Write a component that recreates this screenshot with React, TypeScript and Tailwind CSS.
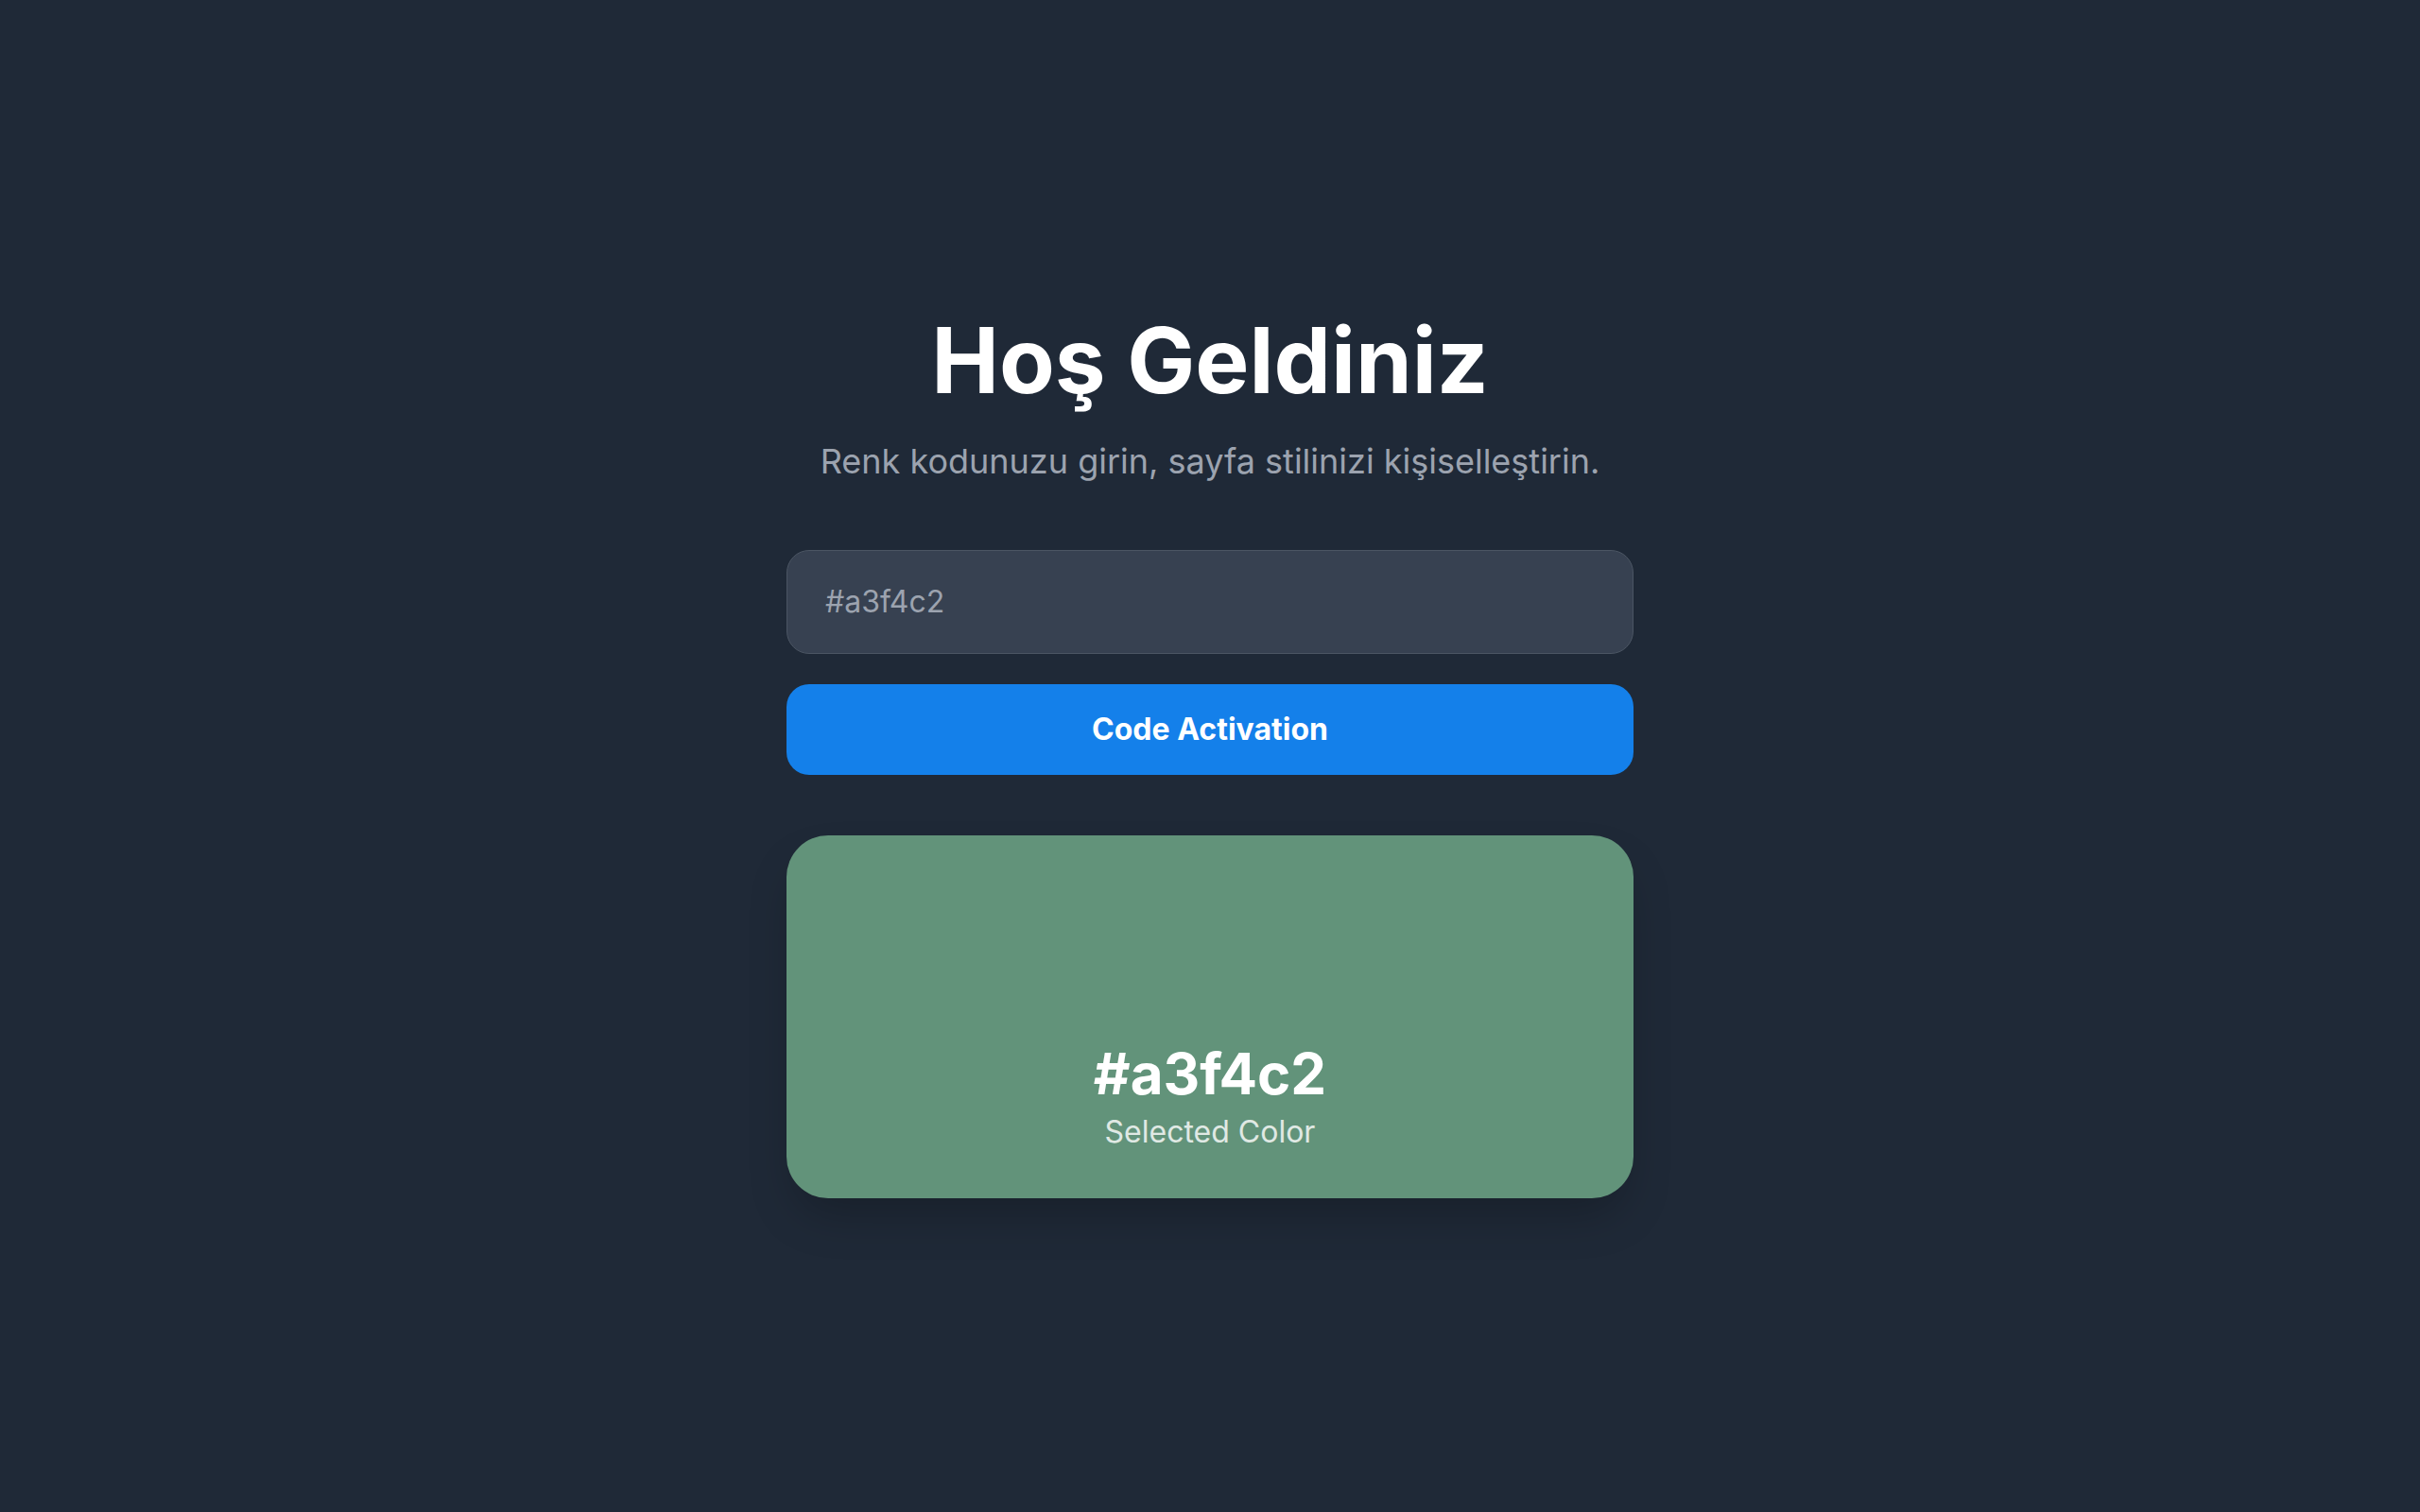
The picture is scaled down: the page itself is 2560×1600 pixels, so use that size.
import { useState } from "react";

export default function App() {
    const [code, setCode] = useState("");
    const [color, setColor] = useState("#a3f4c2");

    const activate = () => {
        if (/^#[0-9a-fA-F]{6}$/.test(code.trim())) {
            setColor(code.trim());
        }
    };

    return (
        <div
            className="min-h-screen w-full bg-[#1f2937] flex items-center justify-center"
            style={{ fontFamily: "Inter, 'Noto Sans', sans-serif" }}
        >
            <div className="w-full max-w-[896px] flex flex-col items-center">
                {/* Başlık */}
                <h1 className="text-8xl font-bold text-white">Hoş Geldiniz</h1>
                <p className="mt-[39px] text-4xl text-[#9ca3af]">
                    Renk kodunuzu girin, sayfa stilinizi kişiselleştirin.
                </p>

                {/* Form */}
                <input
                    value={code}
                    onChange={(e) => setCode(e.target.value)}
                    placeholder="#a3f4c2"
                    className="mt-[74px] w-full bg-[#374151] border border-[#4b5563] rounded-3xl px-10 py-9 text-[32px] leading-9 text-white placeholder:text-[#9ca3af] outline-none"
                />
                <button
                    onClick={activate}
                    className="mt-8 w-full bg-[#1480ea] text-white text-[32px] leading-9 font-bold rounded-3xl py-[30px]"
                >
                    Code Activation
                </button>

                {/* Renk önizleme */}
                <div className="mt-16 w-full h-96 rounded-[44px] bg-[#62937a] shadow-2xl flex flex-col items-center justify-end pb-[50px]">
                    <span className="text-6xl leading-none font-bold text-white">{color}</span>
                    <span className="mt-3 text-[32px] leading-10 text-white/80">Selected Color</span>
                </div>
            </div>
        </div>
    );
}
